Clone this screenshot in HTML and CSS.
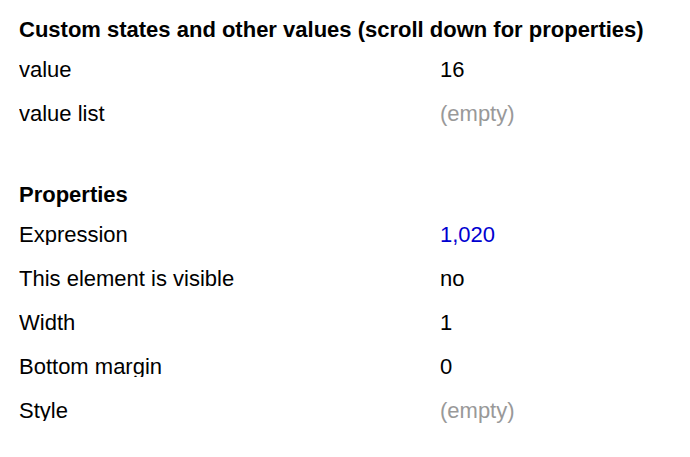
FILE: index.html
```html
<!DOCTYPE html>
<html>
<head>
<meta charset="utf-8">
<link rel="stylesheet" href="styles.css">
</head>
<body>
<div class="panel">
  <section class="group group-states">
    <h2 class="group-title">Custom states and other values (scroll down for properties)</h2>
    <div class="rows">
      <div class="row"><div class="cell label">value</div><div class="cell val">16</div></div>
      <div class="row"><div class="cell label">value list</div><div class="cell val empty">(empty)</div></div>
    </div>
  </section>
  <section class="group group-props">
    <h2 class="group-title">Properties</h2>
    <div class="rows">
      <div class="row"><div class="cell label">Expression</div><div class="cell val link">1,020</div></div>
      <div class="row"><div class="cell label">This element is visible</div><div class="cell val">no</div></div>
      <div class="row"><div class="cell label">Width</div><div class="cell val">1</div></div>
      <div class="row"><div class="cell label">Bottom margin</div><div class="cell val">0</div></div>
      <div class="row"><div class="cell label">Style</div><div class="cell val empty">(empty)</div></div>
    </div>
  </section>
</div>
</body>
</html>
```
FILE: styles.css
```css
html, body {
  margin: 0;
  padding: 0;
  background: #ffffff;
}
body {
  font-family: "Liberation Sans", Arial, Helvetica, sans-serif;
  font-size: 22px;
  color: #000000;
}
.panel {
  padding: 18px 0 0 19px;
  display: flex;
  flex-direction: column;
}
.group-title {
  margin: 0;
  font-size: 22px;
  font-weight: bold;
  line-height: 24px;
  height: 24px;
}
.rows {
  display: flex;
  flex-direction: column;
  gap: 20px;
  margin-top: 16px;
}
.group-props {
  margin-top: 57px;
}
.group-props .rows {
  margin-top: 16px;
}
.row {
  display: grid;
  grid-template-columns: 421px 1fr;
  height: 24px;
}
.cell {
  line-height: 24px;
  white-space: nowrap;
}
.label {
  height: 22px;
  overflow: hidden;
}
.val.empty {
  color: #999999;
}
.val.link {
  color: #0000d0;
}
```
